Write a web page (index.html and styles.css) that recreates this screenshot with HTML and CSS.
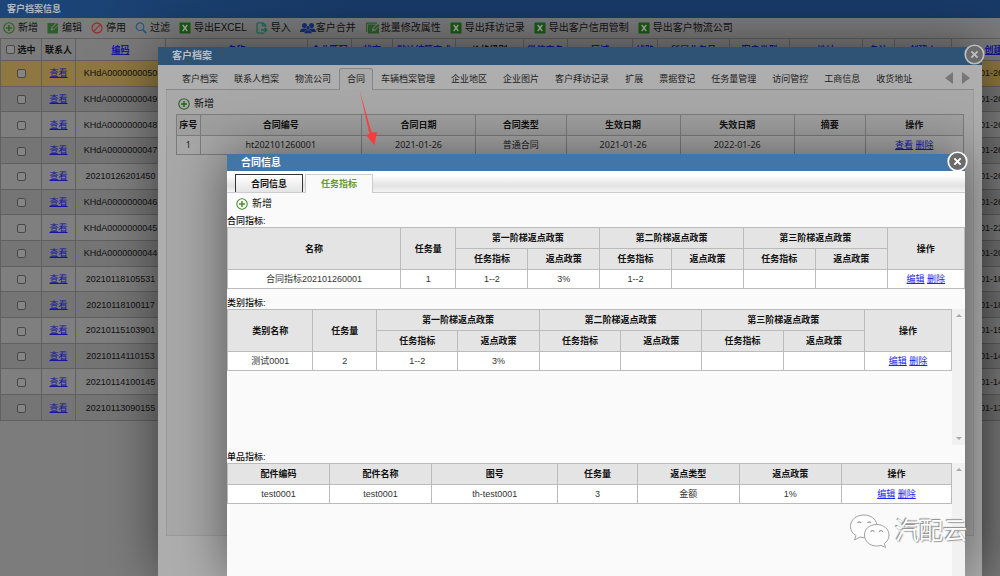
FILE: index.html
```html
<!DOCTYPE html>
<html lang="zh-CN">
<head>
<meta charset="utf-8">
<title>客户档案信息</title>
<link rel="stylesheet" href="styles.css">
</head>
<body>
<svg class="defs" aria-hidden="true">
  <symbol id="i-add" viewBox="0 0 12 12"><g fill="none" stroke="currentColor"><circle cx="6" cy="6" r="5.2" stroke-width="1.1"/><path d="M6 3v6M3 6h6" stroke-width="1.5"/></g></symbol>
  <symbol id="i-edit" viewBox="0 0 12 12"><path d="M.5 1h8.300L4.500 5.300 3.700 8.500l3-.8L11 3.700v7.800H.5z" fill="currentColor"/><path d="M5.200 7.300l.6-2L10 1l1.500 1.500-4.300 4.200z" fill="currentColor"/></symbol>
  <symbol id="i-stop" viewBox="0 0 12 12"><g fill="none" stroke="currentColor" stroke-width="1.300"><circle cx="6" cy="6" r="5"/><path d="M2.500 9.500l7-7"/></g></symbol>
  <symbol id="i-find" viewBox="0 0 12 12"><g fill="none" stroke="currentColor"><circle cx="5" cy="4.700" r="3.800" stroke-width="1.200"/><path d="M7.800 7.600l3.400 3.600" stroke-width="1.700"/></g></symbol>
  <symbol id="i-xls" viewBox="0 0 12 12"><path d="M.5.5h11v11H.5z" fill="currentColor"/><path d="M3.700 3l4.600 6M8.300 3L3.700 9" stroke="#a4b09c" stroke-width="1.400"/></symbol>
  <symbol id="i-import" viewBox="0 0 12 12"><g fill="none" stroke="currentColor" stroke-width="1.300"><path d="M9.500 5V3L7 .8H2.200Q1 .8 1 2v8q0 1.200 1.200 1.200h6"/><path d="M6.500.8v2.700h3"/><path d="M5 8h5.500M8.500 5.800L10.800 8l-2.300 2.200"/></g></symbol>
  <symbol id="i-users" viewBox="0 0 16 12"><g fill="currentColor"><circle cx="4.500" cy="3.500" r="2.500"/><circle cx="11.500" cy="3.500" r="2.500"/><path d="M0 10c0-3 2-3.500 4.500-3.500S8 7.500 8 7.500s1-1 3.500-1S16 7 16 10z"/><circle cx="8" cy="5.700" r="2" stroke="#777" stroke-width=".5"/><path d="M4 11.500C4 9 6 8.200 8 8.200s4 .8 4 3.300z" stroke="#777" stroke-width=".5"/></g></symbol>
  <symbol id="i-batch" viewBox="0 0 14 12"><path d="M0 .5h11v1.200H1.200V10H0z" fill="currentColor"/><path d="M2 2.500h8L6.500 6 5.800 9.500l3.200-.8 4-4v6.800H2z" fill="currentColor"/><path d="M7.500 7.500l.5-1.700L12.200 2l1.300 1.400-4 3.700z" fill="currentColor"/></symbol>
  <symbol id="i-close" viewBox="0 0 22 22"><circle cx="11" cy="11" r="9.700" fill="#6b6b6b" stroke="currentColor" stroke-width="1.800"/><path d="M7.700 7.700l6.600 6.600M14.300 7.700l-6.600 6.600" stroke="currentColor" stroke-width="2"/></symbol>
</svg>

<main class="page">
  <h1 class="page-title">客户档案信息</h1>
  <div class="toolbar">
    <button class="tool"><svg class="ico green"><use href="#i-add"/></svg>新增</button>
    <button class="tool"><svg class="ico leaf"><use href="#i-edit"/></svg>编辑</button>
    <button class="tool"><svg class="ico red"><use href="#i-stop"/></svg>停用</button>
    <button class="tool"><svg class="ico blue"><use href="#i-find"/></svg>过滤</button>
    <button class="tool"><svg class="ico xls"><use href="#i-xls"/></svg>导出EXCEL</button>
    <button class="tool"><svg class="ico teal"><use href="#i-import"/></svg>导入</button>
    <button class="tool tight"><svg class="ico wide navy"><use href="#i-users"/></svg>客户合并</button>
    <button class="tool tight"><svg class="ico wide leaf"><use href="#i-batch"/></svg>批量修改属性</button>
    <button class="tool"><svg class="ico xls"><use href="#i-xls"/></svg>导出拜访记录</button>
    <button class="tool"><svg class="ico xls"><use href="#i-xls"/></svg>导出客户信用管制</button>
    <button class="tool"><svg class="ico xls"><use href="#i-xls"/></svg>导出客户物流公司</button>
  </div>
  <table class="customers">
    <colgroup><col class="w41"><col class="w34"><col class="w90"><col class="w142"><col class="w44"><col class="w41"><col class="w63"><col class="w68"><col class="w44"><col class="w65"><col class="w25"><col class="w72"><col class="w60"><col class="w73"><col class="w32"><col class="w57"><col class="w102"></colgroup>
    <thead><tr>
      <th><label class="pick"><input type="checkbox">选中</label></th><th>联系人</th><th><a href="#">编码</a></th><th><a href="#">名称</a></th><th><a href="#">企业匹配</a></th><th><a href="#">状态</a></th><th><a href="#">默认结算方式</a></th><th>价格级别</th><th><a href="#">微信实名</a></th><th><a href="#">区域</a></th><th><a href="#">线路</a></th><th><a href="#">所属业务员</a></th><th><a href="#">客户类型</a></th><th><a href="#">地址</a></th><th><a href="#">备注</a></th><th><a href="#">创建人</a></th><th><a href="#">创建时间</a></th>
    </tr></thead>
    <tbody>
      <tr class="current"><td><input type="checkbox" aria-label="选中"></td><td><a href="#">查看</a></td><td>KHdA0000000050</td><td colspan="13"></td><td class="time">2021-01-26 15:11:50</td></tr>
      <tr><td><input type="checkbox" aria-label="选中"></td><td><a href="#">查看</a></td><td>KHdA0000000049</td><td colspan="13"></td><td class="time">2021-01-26 15:11:50</td></tr>
      <tr><td><input type="checkbox" aria-label="选中"></td><td><a href="#">查看</a></td><td>KHdA0000000048</td><td colspan="13"></td><td class="time">2021-01-26 15:11:50</td></tr>
      <tr><td><input type="checkbox" aria-label="选中"></td><td><a href="#">查看</a></td><td>KHdA0000000047</td><td colspan="13"></td><td class="time">2021-01-26 15:11:50</td></tr>
      <tr><td><input type="checkbox" aria-label="选中"></td><td><a href="#">查看</a></td><td>20210126201450</td><td colspan="13"></td><td class="time">2021-01-26 15:11:50</td></tr>
      <tr><td><input type="checkbox" aria-label="选中"></td><td><a href="#">查看</a></td><td>KHdA0000000046</td><td colspan="13"></td><td class="time">2021-01-26 15:11:50</td></tr>
      <tr><td><input type="checkbox" aria-label="选中"></td><td><a href="#">查看</a></td><td>KHdA0000000045</td><td colspan="13"></td><td class="time">2021-01-22 15:11:50</td></tr>
      <tr><td><input type="checkbox" aria-label="选中"></td><td><a href="#">查看</a></td><td>KHdA0000000044</td><td colspan="13"></td><td class="time">2021-01-20 15:11:50</td></tr>
      <tr><td><input type="checkbox" aria-label="选中"></td><td><a href="#">查看</a></td><td>20210118105531</td><td colspan="13"></td><td class="time">2021-01-18 10:55:31</td></tr>
      <tr><td><input type="checkbox" aria-label="选中"></td><td><a href="#">查看</a></td><td>20210118100117</td><td colspan="13"></td><td class="time">2021-01-18 10:01:17</td></tr>
      <tr><td><input type="checkbox" aria-label="选中"></td><td><a href="#">查看</a></td><td>20210115103901</td><td colspan="13"></td><td class="time">2021-01-15 10:39:01</td></tr>
      <tr><td><input type="checkbox" aria-label="选中"></td><td><a href="#">查看</a></td><td>20210114110153</td><td colspan="13"></td><td class="time">2021-01-14 11:01:53</td></tr>
      <tr><td><input type="checkbox" aria-label="选中"></td><td><a href="#">查看</a></td><td>20210114100145</td><td colspan="13"></td><td class="time">2021-01-14 10:01:45</td></tr>
      <tr><td><input type="checkbox" aria-label="选中"></td><td><a href="#">查看</a></td><td>20210113090155</td><td colspan="13"></td><td class="time">2021-01-13 09:01:55</td></tr>
    </tbody>
  </table>
</main>

<section class="dialog profile" role="dialog" aria-label="客户档案">
  <h2 class="dialog-title">客户档案</h2>
  <button class="close" aria-label="关闭"><svg><use href="#i-close"/></svg></button>
  <div class="tabs" role="tablist">
    <button class="tab">客户档案</button><button class="tab">联系人档案</button><button class="tab">物流公司</button><button class="tab active">合同</button><button class="tab">车辆档案管理</button><button class="tab">企业地区</button><button class="tab">企业图片</button><button class="tab">客户拜访记录</button><button class="tab">扩展</button><button class="tab">票据登记</button><button class="tab">任务量管理</button><button class="tab">访问管控</button><button class="tab">工商信息</button><button class="tab">收货地址</button>
    <span class="pager"><button class="prev" aria-label="上一页"></button><button class="next" aria-label="下一页"></button></span>
  </div>
  <div class="panel">
    <button class="tool add"><svg class="ico green"><use href="#i-add"/></svg>新增</button>
    <table class="grid contracts">
      <thead><tr><th>序号</th><th>合同编号</th><th>合同日期</th><th>合同类型</th><th>生效日期</th><th>失效日期</th><th>摘要</th><th>操作</th></tr></thead>
      <tbody><tr><td>1</td><td>ht202101260001</td><td>2021-01-26</td><td>普通合同</td><td>2021-01-26</td><td>2022-01-26</td><td></td><td><a href="#">查看</a> <a href="#">删除</a></td></tr></tbody>
    </table>
  </div>
</section>

<section class="dialog contract" role="dialog" aria-label="合同信息">
  <h2 class="dialog-title">合同信息</h2>
  <button class="close" aria-label="关闭"><svg><use href="#i-close"/></svg></button>
  <div class="subtabs" role="tablist"><button class="subtab focus">合同信息</button><button class="subtab on">任务指标</button></div>
  <button class="tool add"><svg class="ico green"><use href="#i-add"/></svg>新增</button>

  <h3 class="caption">合同指标:</h3>
  <table class="grid targets">
    <thead>
      <tr><th rowspan="2" class="name">名称</th><th rowspan="2" class="qty">任务量</th><th colspan="2">第一阶梯返点政策</th><th colspan="2">第二阶梯返点政策</th><th colspan="2">第三阶梯返点政策</th><th rowspan="2" class="ops">操作</th></tr>
      <tr><th>任务指标</th><th>返点政策</th><th>任务指标</th><th>返点政策</th><th>任务指标</th><th>返点政策</th></tr>
    </thead>
    <tbody><tr><td>合同指标202101260001</td><td>1</td><td>1--2</td><td>3%</td><td>1--2</td><td></td><td></td><td></td><td><a href="#">编辑</a> <a href="#">删除</a></td></tr></tbody>
  </table>

  <h3 class="caption">类别指标:</h3>
  <div class="scroller category-box">
    <table class="grid categories">
      <thead>
        <tr><th rowspan="2" class="name">类别名称</th><th rowspan="2" class="qty">任务量</th><th colspan="2">第一阶梯返点政策</th><th colspan="2">第二阶梯返点政策</th><th colspan="2">第三阶梯返点政策</th><th rowspan="2" class="ops">操作</th></tr>
        <tr><th>任务指标</th><th>返点政策</th><th>任务指标</th><th>返点政策</th><th>任务指标</th><th>返点政策</th></tr>
      </thead>
      <tbody><tr><td>测试0001</td><td>2</td><td>1--2</td><td>3%</td><td></td><td></td><td></td><td></td><td><a href="#">编辑</a> <a href="#">删除</a></td></tr></tbody>
    </table>
    <div class="scrollbar"><i class="up"></i><i class="down"></i></div>
  </div>

  <h3 class="caption">单品指标:</h3>
  <div class="scroller item-box">
    <table class="grid items">
      <thead><tr><th>配件编码</th><th>配件名称</th><th>图号</th><th>任务量</th><th>返点类型</th><th>返点政策</th><th>操作</th></tr></thead>
      <tbody><tr><td>test0001</td><td>test0001</td><td>th-test0001</td><td>3</td><td>金额</td><td>1%</td><td><a href="#">编辑</a> <a href="#">删除</a></td></tr></tbody>
    </table>
    <div class="scrollbar"><i class="up"></i></div>
  </div>
</section>

<svg class="arrow" viewBox="0 0 20 60" aria-hidden="true"><path d="M1.500 1l12 42.500 5.500-.5-2.500 13.500L8 46l3.500-1z" fill="#fb3c3c"/></svg>

<div class="watermark">
  <svg class="wechat" viewBox="0 0 42 36" aria-hidden="true">
    <g fill="#fdfdfd" stroke="#a0a0a0" stroke-width="1">
      <path d="M15 2C7 2 1.500 7 1.500 13.500c0 4 2 7 5.500 9L5.500 27l5.500-3c2 .6 4 .8 6 .6L28 12C27 6 22 2 15 2z"/>
      <path d="M27.500 11.500C20.500 11.500 15.500 16 15.500 22S20.500 33 27.500 33c1.500 0 3-.2 4.500-.7l4.500 2.200-1.200-4c3-2 4.700-5 4.700-8.500 0-6-5.500-10.500-12.500-10.500z"/>
    </g>
    <g fill="none" stroke="#999" stroke-width="1.200"><path d="M8.500 10a1.800 1.800 0 0 1 3.400 0M18.500 10a1.800 1.800 0 0 1 3.400 0M22 19a1.500 1.500 0 0 1 3 0M30.500 19a1.500 1.500 0 0 1 3 0"/></g>
  </svg>
  <span>汽配云</span>
</div>
</body>
</html>
```
FILE: styles.css
```css
* { box-sizing: border-box; }
html, body { height: 100%; }
body {
  margin: 0;
  position: relative;
  overflow: hidden;
  background: #7c7c7c;
  color: #111;
  font: 9px/12px "Liberation Sans", "Noto Sans CJK SC", sans-serif;
}
h1, h2, h3 { margin: 0; }
button {
  margin: 0; padding: 0; border: 0;
  background: none; color: inherit; font: inherit;
  white-space: nowrap;
}
table { border-collapse: collapse; table-layout: fixed; }
th, td { padding: 0; text-align: center; white-space: nowrap; }
.defs { position: absolute; width: 0; height: 0; }

/* customer list */
.page { height: 100%; overflow: hidden; }
.page-title {
  height: 18px; padding-left: 7px;
  background: linear-gradient(90deg, #1c467a, #183a66 35%);
  color: #b4b8bd;
  font-size: 9px; line-height: 18px;
}
.toolbar {
  display: flex; align-items: center; gap: 9px;
  height: 20px; padding-left: 3px;
  background: #7b7b7b;
}
.tool {
  display: flex; align-items: center; gap: 3px;
  font: 10px/14px "Liberation Sans", "Noto Sans CJK SC", sans-serif;
}
.tight { gap: 0; }
.ico { width: 12px; height: 12px; flex: none; }
.wide { width: 16px; }
.green { color: #2f5f1f; }
.leaf { color: #2d5f2b; }
.red { color: #9a3030; }
.blue { color: #2a5687; }
.xls { color: #1d5a17; }
.teal { color: #1c6e55; }
.navy { color: #142f78; }

.customers { width: 1054px; height: 383px; }
.customers th, .customers td { border: 1px solid #606060; }
.customers th { height: 22px; background: #7b7b7b; }
.customers tr { background: #7f7f7f; }
.customers tbody tr:nth-child(even) { background: #757575; }
.customers tbody tr.current { background: #8e7740; }
.customers .time { padding-left: 5px; text-align: left; }
.customers a { color: #1515a0; }
.customers input {
  appearance: none;
  width: 9px; height: 9px; margin: 0;
  border: 1px solid #484848; border-radius: 2px;
  background: #858585;
  vertical-align: middle;
}
.pick { display: flex; align-items: center; justify-content: center; gap: 2px; }
.w25 { width: 25px; } .w32 { width: 32px; } .w34 { width: 34px; }
.w41 { width: 41px; } .w44 { width: 44px; } .w57 { width: 57px; }
.w60 { width: 60px; } .w63 { width: 63px; } .w65 { width: 65px; }
.w68 { width: 68px; } .w72 { width: 72px; } .w73 { width: 73px; }
.w90 { width: 90px; } .w102 { width: 102px; } .w142 { width: 142px; }

/* dialogs */
.dialog { position: absolute; bottom: 0; }
.dialog-title { height: 18px; padding-left: 14px; font-size: 10px; line-height: 18px; }
.close { position: absolute; top: -3px; right: -3px; width: 21px; height: 21px; }
.close svg { display: block; width: 100%; height: 100%; }
.profile {
  top: 47px; left: 158px; right: 18px;
  display: flex; flex-direction: column;
  padding-bottom: 40px;
  background: #aeaeae;
  box-shadow: 0 0 50px rgba(0, 0, 0, .5);
}
.profile .dialog-title { background: #2f5375; color: #b9bec4; }
.profile .close { color: #bcbcbc; }

.tabs {
  display: flex; align-items: flex-end;
  height: 25px; padding: 0 4px 0 8px; margin: 0 8px;
  border-bottom: 1px solid #8a8a8a;
}
.tab { height: 21px; padding: 0 7px; border: 1px solid transparent; color: #222; }
.tab.active {
  height: 22px; margin-bottom: -1px;
  border-color: #858585; border-bottom-color: #aaa;
  border-radius: 3px 3px 0 0; background: #aaa;
}
.pager { display: flex; gap: 9px; margin: 0 0 5px auto; }
.prev, .next { border: 6px solid transparent; }
.prev { border-left: 0; border-right: 8px solid #777; }
.next { border-right: 0; border-left: 8px solid #777; }
.panel {
  flex: 1; margin: 0 8px; padding: 5px 9px;
  border: 1px solid #9b9b9b; border-top: 0;
  background: #a8a8a8;
}
.add { height: 18px; padding-left: 2px; gap: 4px; }
.grid { width: 100%; }
.grid th, .grid td { border: 1px solid #bbb; }
.contracts { margin-top: 1px; font-family: "Noto Sans", "Noto Sans CJK SC", sans-serif; }
.contracts th, .contracts td { border-color: #7c7c7c; }
.contracts th { height: 21px; background: #a0a0a0; }
.contracts td { height: 19px; color: #222; }
.contracts a { color: #1717a6; }
.contracts th:nth-child(1) { width: 3%; }
.contracts th:nth-child(2) { width: 20.5%; }
.contracts th:nth-child(3), .contracts th:nth-child(5), .contracts th:nth-child(6) { width: 14.5%; }
.contracts th:nth-child(4) { width: 11.5%; }
.contracts th:nth-child(7) { width: 9%; }

.contract {
  top: 154px; left: 227px; right: 35px;
  display: flex; flex-direction: column;
  background: #fafafa;
  box-shadow: 0 0 50px rgba(0, 0, 0, .5);
}
.contract .dialog-title { height: 17px; background: #4376a8; color: #fff; line-height: 17px; }
.contract .close { color: #fff; }
.subtabs {
  display: flex; gap: 2px; align-items: flex-end; flex: none;
  height: 22px; padding-left: 8px;
  border-bottom: 1px solid #ccc;
  background: linear-gradient(#fff 20%, #e2e2e2 70%, #f4f4f4);
}
.subtab { height: 18px; padding: 0 15px; font-weight: bold; }
.subtab.focus { border: 1px solid #333; border-bottom: 0; background: linear-gradient(#fff, #e4e4e4); }
.subtab.on { height: 19px; padding: 0 15px; margin-bottom: -1px; border: 1px solid #ccc; border-bottom: 0; background: #fafafa; color: #67992c; }
.contract .add { flex: none; height: 22px; padding-left: 9px; }
.contract .green { color: #4b8f33; }
.caption { flex: none; height: 12px; font-size: 9px; font-weight: 500; line-height: 12px; }
.contract .grid th { height: 21px; background: #e4e4e4; }
.contract .grid td { height: 19px; background: #fff; color: #333; }
.contract .grid a { color: #2222f0; }
.targets { flex: none; margin-bottom: 8px; }
.targets .name { width: 23.5%; }
.targets .qty { width: 7.5%; }
.targets .ops { width: 10.5%; }
.categories .name { width: 11.8%; }
.categories .qty { width: 8.8%; }
.categories .ops { width: 12%; }
.items th:nth-child(1), .items th:nth-child(2), .items th:nth-child(5), .items th:nth-child(6) { width: 14.1%; }
.items th:nth-child(3) { width: 17.4%; }
.items th:nth-child(4) { width: 11%; }
.scroller { display: flex; align-items: flex-start; }
.category-box { flex: none; height: 136px; margin-bottom: 6px; }
.item-box { flex: 1; min-height: 0; }
.scrollbar {
  flex: none; align-self: stretch;
  display: flex; flex-direction: column; justify-content: space-between; align-items: center;
  width: 13px; padding: 5px 0;
  background: #f1f1f1;
}
.up, .down { border: 3px solid transparent; }
.up { border-top: 0; border-bottom-color: #aaa; }
.down { border-bottom: 0; border-top-color: #aaa; }

/* annotations */
.arrow { position: absolute; top: 89px; left: 358px; width: 20px; height: 60px; }
.watermark {
  position: absolute; right: 33px; bottom: 27px;
  display: flex; align-items: center; gap: 4px;
  color: #fff; font-size: 24px; line-height: 36px;
  text-shadow: -1px -1px 1px #888, 1px 1px 1px #999;
}
.wechat { width: 42px; height: 36px; }
```
